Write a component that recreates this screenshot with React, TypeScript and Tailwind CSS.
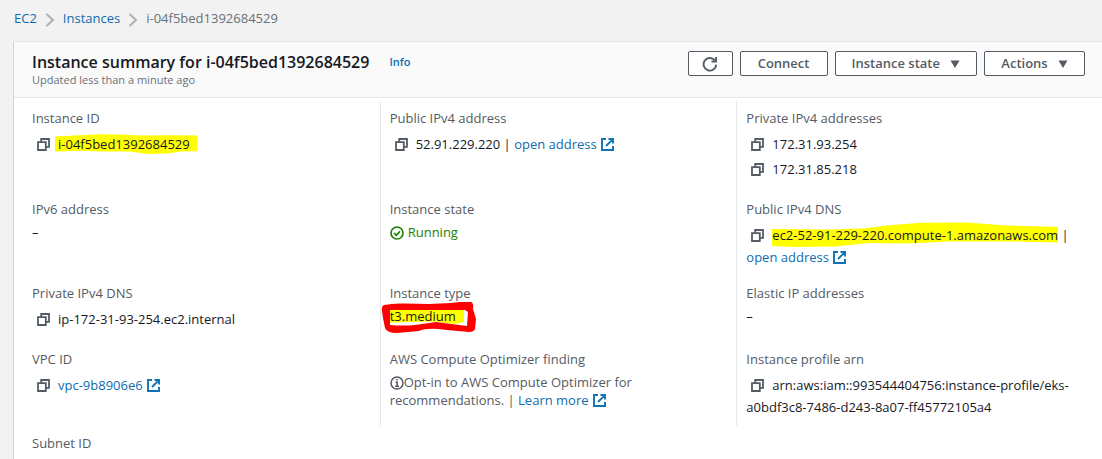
import type { ReactNode } from "react";

const linkClass = "text-[#0f6cb0] hover:underline";

function Chevron() {
  return (
    <svg className="h-4 w-2.5 shrink-0" viewBox="0 0 10 16" fill="none" stroke="#aab0b5" strokeWidth="2" aria-hidden="true">
      <path d="M1.5 3 8 9l-6.500 6" />
    </svg>
  );
}

function RefreshIcon() {
  return (
    <svg className="h-4 w-4" viewBox="0 0 16 16" fill="none" stroke="#545b64" strokeWidth="1.900" aria-hidden="true">
      <path d="M14.200 8.600A6.300 6.300 0 1 1 12.800 4.300" />
      <path d="M9.500 5.500H14V1" />
    </svg>
  );
}

function Caret() {
  return (
    <svg className="h-2 w-2.5" viewBox="0 0 10 8" fill="#545b64" aria-hidden="true">
      <path d="M.5.500h9L5 8z" />
    </svg>
  );
}

function CopyButton({ label }: { label: string }) {
  return (
    <button type="button" aria-label={`Copy ${label}`} className="mr-2 ml-[5px] shrink-0">
      <svg className="h-[13px] w-[13px]" viewBox="0 0 13 13" fill="none" stroke="#545b64" strokeWidth="1.800" aria-hidden="true">
        <path d="M1 4.200h7.800V12H1z" />
        <path d="M4.200 4V1H12v7.800H9" />
      </svg>
    </button>
  );
}

function ExternalIcon() {
  return (
    <svg className="ml-1 inline-block h-[13px] w-[13px] align-[-2px]" viewBox="0 0 13 13" fill="none" stroke="#0f73b5" strokeWidth="1.900" aria-hidden="true">
      <path d="M5 1H1v11h11V8" />
      <path d="M7.500 1H12v4.500M11.700 1.300 5 8" />
    </svg>
  );
}

function CheckIcon() {
  return (
    <svg className="mr-1 inline-block h-3.5 w-3.5 align-[-3px]" viewBox="0 0 14 14" fill="none" stroke="#1d8102" strokeWidth="1.700" aria-hidden="true">
      <circle cx="7" cy="7" r="6" />
      <path d="m4 7 2.300 2.300L10 5.300" />
    </svg>
  );
}

function InfoIcon() {
  return (
    <svg className="inline-block h-3.5 w-3.5 align-[-3px]" viewBox="0 0 14 14" fill="none" stroke="#545b64" strokeWidth="1.500" aria-hidden="true">
      <circle cx="7" cy="7" r="6" />
      <path d="M5.500 6.200H7.200V10M5.200 10.200h3.800M6.200 3.800h1.600" />
    </svg>
  );
}

function Marked({ box, path, children }: { box: string; path: string; children: ReactNode }) {
  return (
    <mark className="relative isolate inline-block bg-transparent text-inherit">
      <svg className={`absolute -z-10 ${box}`} viewBox="0 0 100 100" preserveAspectRatio="none" fill="#ffff00" aria-hidden="true">
        <path d={path} />
      </svg>
      {children}
    </mark>
  );
}

function Cell({ label, divided = true, children }: { label: string; divided?: boolean; children?: ReactNode }) {
  return (
    <div className={`pt-[7px] pr-6 pb-[10px] pl-[9px] ${divided ? "border-l border-[#e6e9e9]" : ""}`}>
      <dt className="leading-5 text-[#545b64]">{label}</dt>
      <dd className="mt-1 leading-[18px]">{children}</dd>
    </div>
  );
}

function CopyLine({ name, children }: { name: string; children: ReactNode }) {
  return (
    <div className="flex h-[25px] items-center leading-[25px] whitespace-nowrap">
      <CopyButton label={name} />
      <span>{children}</span>
    </div>
  );
}

function ActionButton({ children, className }: { children: ReactNode; className: string }) {
  return (
    <button
      type="button"
      className={`flex h-[25px] items-center justify-center rounded-xs border border-[#545b64] bg-white text-[13px] font-semibold text-[#545b64] ${className}`}
    >
      {children}
    </button>
  );
}

export default function App() {
  return (
    <main className="flex min-h-screen flex-col overflow-hidden bg-[#f2f2f2] font-['Open_Sans','Noto_Sans',sans-serif] text-[13px] text-[#16191f]">
      <nav aria-label="Breadcrumb" className="pt-[9px] pb-3 pl-[14px]">
        <ol className="flex h-5 items-center gap-2">
          <li><a href="#ec2" className={linkClass}>EC2</a></li>
          <li><Chevron /></li>
          <li><a href="#instances" className={linkClass}>Instances</a></li>
          <li><Chevron /></li>
          <li className="text-[#687078]">i-04f5bed1392684529</li>
        </ol>
      </nav>

      <section className="ml-[13px] flex-1 border-t border-l border-t-[#e4e7e7] border-l-[#cfd3d3] bg-white">
        <header className="flex items-start justify-between border-b border-[#e4e7e7] bg-[#fafafa] pt-[9px] pr-[17px] pb-[10px] pl-[18px]">
          <div>
            <div className="flex items-center gap-5">
              <h1 className="text-base leading-[22px] font-semibold">Instance summary for i-04f5bed1392684529</h1>
              <a href="#info" className="text-[11px] leading-4 font-semibold text-[#0f6cb0]">Info</a>
            </div>
            <p className="text-[11px] leading-[14px] text-[#687078]">Updated less than a minute ago</p>
          </div>
          <div className="flex gap-[7px]">
            <button type="button" aria-label="Refresh" className="flex h-[25px] w-[45px] items-center justify-center rounded-xs border border-[#545b64] bg-white">
              <RefreshIcon />
            </button>
            <ActionButton className="min-w-[88px] px-4">Connect</ActionButton>
            <ActionButton className="min-w-[142px] gap-2.5 px-4">Instance state <Caret /></ActionButton>
            <ActionButton className="min-w-[101px] gap-2.5 px-4">Actions <Caret /></ActionButton>
          </div>
        </header>

        <dl className="mt-[3px] grid grid-cols-3 px-[9px]">
          <Cell label="Instance ID" divided={false}>
            <CopyLine name="instance ID">
              <Marked
                box="top-[2px] -left-[3px] h-[20px] w-[142px]"
                path="M0 12 14 8 30 1 46 2 60 8 80 6 100 8V86L88 88 80 98 66 100 52 88 34 88 18 84 0 88z"
              >
                i-04f5bed1392684529
              </Marked>
            </CopyLine>
          </Cell>
          <Cell label="Public IPv4 address">
            <CopyLine name="public IPv4 address">
              52.91.229.220 | <a href="#open-ip" className={linkClass}>open address<ExternalIcon /></a>
            </CopyLine>
          </Cell>
          <Cell label="Private IPv4 addresses">
            <CopyLine name="first private address">172.31.93.254</CopyLine>
            <CopyLine name="second private address">172.31.85.218</CopyLine>
          </Cell>

          <Cell label="IPv6 address" divided={false}>–</Cell>
          <Cell label="Instance state">
            <span className="text-[#1d8102]"><CheckIcon />Running</span>
          </Cell>
          <Cell label="Public IPv4 DNS">
            <CopyLine name="public IPv4 DNS">
              <Marked
                box="-top-[1px] left-0 h-[25px] w-[286px]"
                path="M0 28 20 30 32 26 40 14 52 3 68 2 82 14 100 20V82L84 78 62 78 48 86 34 84 22 98 8 100 0 96z"
              >
                ec2-52-91-229-220.compute-1.amazonaws.com
              </Marked>{" "}|
            </CopyLine>
            <a href="#open-dns" className={linkClass}>open address<ExternalIcon /></a>
          </Cell>

          <Cell label="Private IPv4 DNS" divided={false}>
            <CopyLine name="private IPv4 DNS">ip-172-31-93-254.ec2.internal</CopyLine>
          </Cell>
          <Cell label="Instance type">
            <span className="relative inline-block">
              <Marked box="top-[2px] left-0 h-[15px] w-[74px]" path="M0 0H100V86L88 100 60 84 30 86 0 90z">
                t3.medium
              </Marked>
              <svg className="absolute -top-[5px] -left-[9px] h-[33px] w-[96px]" viewBox="0 0 96 33" fill="#ff0000" fillRule="evenodd" aria-hidden="true">
                <path d="M3 3Q12 1 24 1.500L48 2 70 1Q84 -1 90 0 93 1 92 7L95 17 94 27Q93 30 88 30L66 28Q46 25 38 29L16 31Q6 31 4 26L2 16 1 9Q0 4 3 3zM9 8V23Q22 24 34 23L55 20 86 24 87 10 84 8 56 8 30 8z" />
              </svg>
            </span>
          </Cell>
          <Cell label="Elastic IP addresses">–</Cell>

          <Cell label="VPC ID" divided={false}>
            <CopyLine name="VPC ID">
              <a href="#vpc" className={linkClass}>vpc-9b8906e6<ExternalIcon /></a>
            </CopyLine>
          </Cell>
          <Cell label="AWS Compute Optimizer finding">
            <span className="text-[#545b64]">
              <InfoIcon />Opt-in to AWS Compute Optimizer for<br />recommendations. |{" "}
            </span>
            <a href="#learn-more" className={linkClass}>Learn more<ExternalIcon /></a>
          </Cell>
          <Cell label="Instance profile arn">
            <CopyLine name="instance profile arn">arn:aws:iam::993544404756:instance-profile/eks-</CopyLine>
            a0bdf3c8-7486-d243-8a07-ff45772105a4
          </Cell>

          <div className="pt-[7px] pl-[9px]">
            <dt className="leading-5 text-[#545b64]">Subnet ID</dt>
          </div>
        </dl>
      </section>
    </main>
  );
}
